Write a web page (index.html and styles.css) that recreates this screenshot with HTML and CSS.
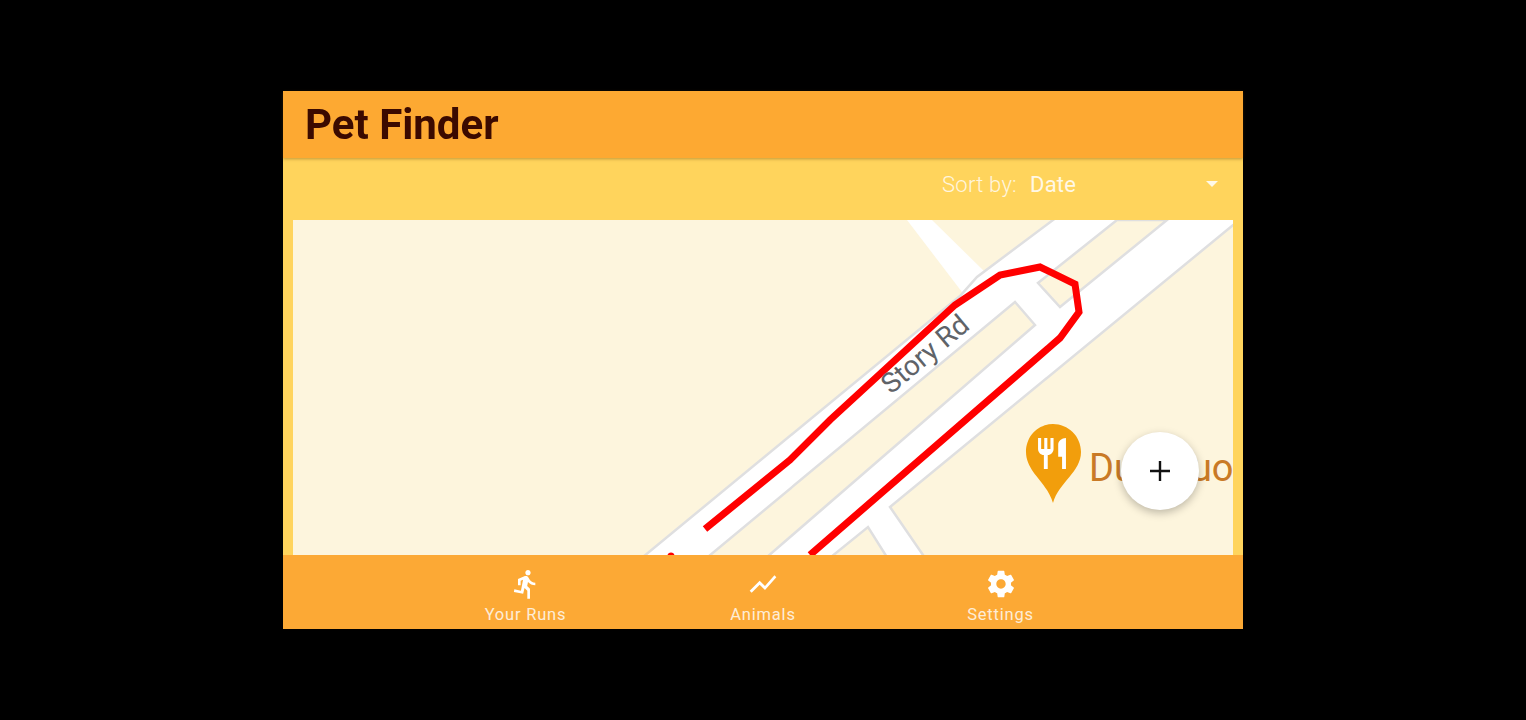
FILE: index.html
```html
<!DOCTYPE html>
<html lang="en">
<head>
<meta charset="utf-8">
<title>Pet Finder</title>
<link rel="stylesheet" href="styles.css">
</head>
<body>
<div class="app">
  <header class="appbar"><h1 class="title">Pet Finder</h1></header>
  <main class="content">
    <div class="sortbar">
      <span class="sort-label">Sort by:</span>
      <div class="select">
        <span class="select-value">Date</span>
        <span class="select-arrow"></span>
      </div>
    </div>
    <div class="map">
      <svg class="map-svg" viewBox="293 220 940 335" width="940" height="335">
        <path class="road-side" d="M880 120L907 220L965 296L985 272L932 220Z"/>
        <path class="road" fill-rule="evenodd" d="M632 566L960 296L977 277L1053 220L1120 170L1300 170L890 507L923 555L932 570L895 570L868 527L815 570L752 570L1035 325L1015 302L697 566ZM1038 283L1060 307L1167 220L1117 220Z"/>
        <path class="route" d="M705 529L790 460L830 420L955 305L1000 275L1040 267L1075 284L1079 312L1060 338L810 555"/>
        <circle class="route-dot" cx="671" cy="556" r="3.5"/>
        <text class="road-label" transform="translate(891 395) rotate(-40)">Story Rd</text>
        <path class="pin" d="M1053 424C1038 424 1026 436 1026 452C1026 472 1047 482 1053 503C1059 482 1081 472 1081 452C1081 436 1068 424 1053 424Z"/>
        <path class="pin-icon" transform="translate(1033.4 435) scale(1.55)" d="M11 9H9V2H7v7H5V2H3v7c0 2.12 1.66 3.84 3.75 3.97V22h2.5v-9.03C11.34 12.84 13 11.12 13 9V2h-2v7zm5-3v8h2.5v8H21V2c-2.76 0-5 2.24-5 4z"/>
        <text class="place-label" x="1089" y="481">Duo Duo</text>
      </svg>
      <button class="fab" type="button" aria-label="Add">
        <svg viewBox="0 0 24 24" width="24" height="24"><path d="M12 2v20M2 12h20"/></svg>
      </button>
    </div>
  </main>
  <nav class="bottomnav">
    <a class="nav-item">
      <svg class="nav-icon" viewBox="0 0 24 24"><path d="M13.49 5.48c1.1 0 2-.9 2-2s-.9-2-2-2-2 .9-2 2 .9 2 2 2zm-3.6 13.9l1-4.4 2.1 2v6h2v-7.5l-2.1-2 .6-3c1.3 1.5 3.3 2.5 5.5 2.5v-2c-1.9 0-3.5-1-4.3-2.4l-1-1.6c-.4-.6-1-1-1.7-1-.3 0-.5.1-.8.1l-5.2 2.2v4.7h2v-3.4l1.8-.7-1.6 8.1-4.9-1-.4 2 7 1.4z"/></svg>
      <span class="nav-label">Your Runs</span>
    </a>
    <a class="nav-item">
      <svg class="nav-icon" viewBox="0 0 24 24"><path d="M3.5 18.49l6-6.01 4 4L22 6.92l-1.41-1.41-7.09 7.97-4-4L2 16.99z"/></svg>
      <span class="nav-label">Animals</span>
    </a>
    <a class="nav-item">
      <svg class="nav-icon" viewBox="0 0 24 24"><path d="M19.43 12.98c.04-.32.07-.64.07-.98s-.03-.66-.07-.98l2.11-1.65c.19-.15.24-.42.12-.64l-2-3.46c-.12-.22-.39-.3-.61-.22l-2.49 1c-.52-.4-1.08-.73-1.69-.98l-.38-2.65C14.46 2.18 14.25 2 14 2h-4c-.25 0-.46.18-.49.42l-.38 2.65c-.61.25-1.17.59-1.69.98l-2.49-1c-.23-.09-.49 0-.61.22l-2 3.46c-.13.22-.07.49.12.64l2.11 1.65c-.04.32-.07.65-.07.98s.03.66.07.98l-2.11 1.65c-.19.15-.24.42-.12.64l2 3.46c.12.22.39.3.61.22l2.49-1c.52.4 1.08.73 1.69.98l.38 2.65c.03.24.24.42.49.42h4c.25 0 .46-.18.49-.42l.38-2.65c.61-.25 1.17-.59 1.69-.98l2.49 1c.23.09.49 0 .61-.22l2-3.46c.12-.22.07-.49-.12-.64l-2.11-1.65zM12 15.5c-1.93 0-3.5-1.57-3.5-3.5s1.57-3.5 3.5-3.5 3.5 1.57 3.5 3.5-1.57 3.5-3.5 3.5z"/></svg>
      <span class="nav-label">Settings</span>
    </a>
  </nav>
</div>
</body>
</html>
```
FILE: styles.css
```css
* { box-sizing: border-box; }
html, body { height: 100%; }
body {
  margin: 0;
  background: #000;
  font-family: Roboto, "Liberation Sans", sans-serif;
  display: flex;
  justify-content: center;
  padding-top: 91px;
  overflow: hidden;
}
.app {
  width: 960px;
  height: 538px;
  display: flex;
  flex-direction: column;
  background: #ffd45c;
  filter: blur(.6px);
}
.appbar {
  height: 67px;
  flex: none;
  background: #fda932;
  padding-left: 22px;
  display: flex;
  align-items: center;
  box-shadow: 0 1px 3px rgba(100, 60, 0, .4);
  position: relative;
  z-index: 1;
}
.title {
  margin: 0;
  font-size: 42px;
  font-weight: 700;
  color: #3b0a00;
}
.content {
  flex: 1;
  display: flex;
  flex-direction: column;
  min-height: 0;
}
.sortbar {
  height: 62px;
  flex: none;
  display: flex;
  align-items: center;
  justify-content: flex-end;
  padding: 0 25px 10px 0;
  font-size: 22px;
  color: #fff;
}
.sort-label {
  font-weight: 300;
  opacity: .8;
  letter-spacing: .25px;
  margin-right: 13px;
}
.select {
  width: 188px;
  display: flex;
  align-items: center;
  justify-content: space-between;
}
.select-value { opacity: .85; letter-spacing: .2px; }
.select-arrow {
  width: 0;
  height: 0;
  border-left: 6px solid transparent;
  border-right: 6px solid transparent;
  border-top: 6px solid rgba(255, 255, 255, .85);
}
.map {
  flex: 1;
  margin: 0 10px;
  position: relative;
  background: #fdf5dd;
  overflow: hidden;
  min-height: 0;
}
.map-svg { display: block; }
.road {
  fill: #fff;
  stroke: #dfdfe0;
  stroke-width: 2.5;
}
.road-side { fill: #fff; }
.route {
  fill: none;
  stroke: #f00;
  stroke-width: 7;
}
.route-dot { fill: #f00; }
.road-label {
  font-family: Roboto, sans-serif;
  font-size: 28px;
  fill: #5f6368;
}
.pin { fill: #f29e0c; }
.pin-icon { fill: #fff; }
.place-label {
  font-family: Roboto, sans-serif;
  font-size: 38px;
  fill: #c97a26;
}
.fab {
  position: absolute;
  left: 828px;
  top: 212px;
  width: 78px;
  height: 78px;
  border: none;
  border-radius: 50%;
  background: #fff;
  padding: 0;
  display: flex;
  align-items: center;
  justify-content: center;
  box-shadow: 0 3px 8px rgba(0, 0, 0, .25);
}
.fab path {
  fill: none;
  stroke: #111;
  stroke-width: 2.4;
}
.bottomnav {
  height: 74px;
  flex: none;
  background: #fca935;
  display: flex;
  justify-content: center;
}
.nav-item {
  width: 237.5px;
  display: flex;
  flex-direction: column;
  align-items: center;
  padding-top: 13px;
  color: #fff;
}
.nav-icon {
  width: 32px;
  height: 32px;
  fill: #fff;
  flex: none;
}
.nav-label {
  font-size: 16.5px;
  line-height: 20px;
  margin-top: 5px;
  letter-spacing: .8px;
  opacity: .8;
}
```
